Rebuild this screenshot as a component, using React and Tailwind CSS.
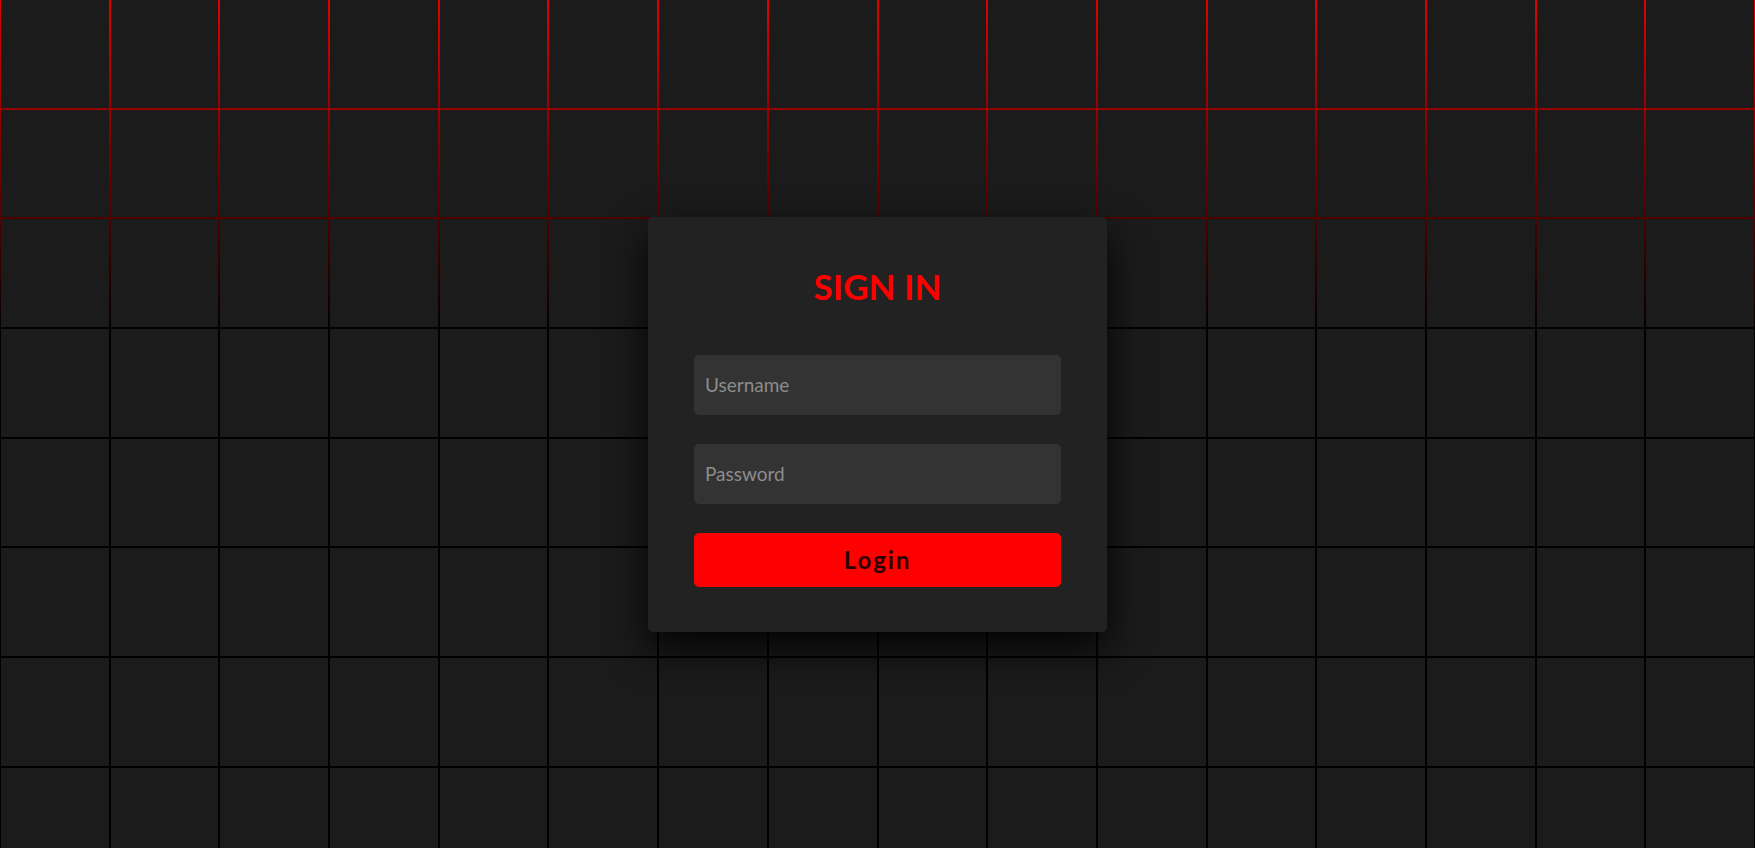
import React from "react";

export default function App() {
  const squares = Array.from({ length: 128 });
  return (
    <div className="relative w-screen h-screen overflow-hidden bg-black font-['Lato','Noto_Sans',sans-serif]">
      <section className="w-full h-full flex flex-wrap justify-center content-start gap-[2px] bg-[linear-gradient(180deg,rgb(225,0,0)_0px,rgb(0,0,0)_336px)]">
        {squares.map((_, i) => (
          <span
            key={i}
            className="block w-[calc(6.25vw-2px)] h-[calc(6.25vw-2px)] bg-[#1b1b1b]"
          />
        ))}
      </section>
      <div className="absolute inset-0 flex items-center justify-center">
        <div className="w-[459px] h-[415px] bg-[#222222] rounded-[5px] px-[46px] pt-[46px] pb-[45px] shadow-[0_17px_40px_rgba(0,0,0,0.9)] flex flex-col gap-[29px]">
          <div className="h-[63px] shrink-0">
            <h2 className="text-center text-[35px] leading-[47px] font-bold text-[#ff0000] uppercase">
              Sign In
            </h2>
          </div>
          <input
            type="text"
            placeholder="Username"
            className="h-[60px] shrink-0 w-full rounded-[5px] bg-[#333333] px-[11px] text-[19px] text-white outline-none placeholder:text-[#8c8c8c]"
          />
          <input
            type="password"
            placeholder="Password"
            className="h-[60px] shrink-0 w-full rounded-[5px] bg-[#333333] px-[11px] text-[19px] text-white outline-none placeholder:text-[#8c8c8c]"
          />
          <button className="h-[54px] shrink-0 w-full rounded-[5px] bg-[#ff0000] text-[24px] font-bold tracking-[0.08em] text-[#2a0000]">
            Login
          </button>
        </div>
      </div>
    </div>
  );
}
